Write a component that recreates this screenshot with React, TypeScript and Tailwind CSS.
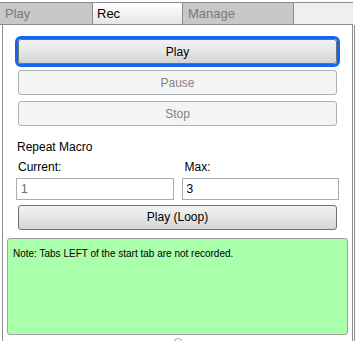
import React, { useState } from 'react';

const font = { fontFamily: '"Segoe UI", "Liberation Sans", Arial, sans-serif' };

type BtnProps = { label: string; disabled?: boolean; focused?: boolean; onClick?: () => void };

const WinButton: React.FC<BtnProps> = ({ label, disabled, focused, onClick }) => {
  if (disabled) {
    return (
      <button
        disabled
        className="h-[25px] w-full rounded-[3px] border border-[#adb2b5] bg-[#f4f4f4] text-[12px] text-[#838383]"
      >
        {label}
      </button>
    );
  }
  return (
    <button
      onClick={onClick}
      className={`h-[25px] w-full rounded-[3px] border border-[#707070] bg-gradient-to-b from-[#f2f2f2] via-[#e6e6e6] to-[#d3d3d3] text-[12px] text-black ${
        focused ? 'shadow-[0_0_0_3px_#1466f0]' : ''
      }`}
    >
      {label}
    </button>
  );
};

export default function App() {
  const [current, setCurrent] = useState('1');
  const [max, setMax] = useState('3');

  return (
    <div className="relative w-[362px] h-[341px] bg-white overflow-hidden" style={font}>
      <div className="w-[353px] h-full flex flex-col pt-[2px]">
        {/* tabs */}
        <div className="flex h-[24px] border-t border-b border-[#8c8c8c] bg-[#efefef]">
          <div className="w-[93px] bg-[#c8c8c8] border-r border-[#8c8c8c] pl-[5px] text-[13px] leading-[21px] text-[#7a7a7a]">
            Play
          </div>
          <div className="w-[90px] bg-gradient-to-b from-white to-[#e6e6e6] border-r border-[#8c8c8c] pl-[4px] text-[13px] leading-[21px] text-black">
            Rec
          </div>
          <div className="w-[111px] bg-[#c8c8c8] border-r border-[#8c8c8c] pl-[5px] text-[13px] leading-[21px] text-[#7a7a7a]">
            Manage
          </div>
        </div>

        {/* panel */}
        <div className="flex-1 ml-[2px] border-l border-r border-[#8c8c8c] flex flex-col">
          <div className="flex flex-col pl-[15px] pr-[15px] pt-[14px] gap-[6px]">
            <WinButton label="Play" focused />
            <WinButton label="Pause" disabled />
            <WinButton label="Stop" disabled />
          </div>

          <div className="pl-[13px] pr-[13px] pt-[12px] text-[12px] text-black">
            <div className="leading-[18px] pl-[1px]">Repeat Macro</div>
            <div className="flex gap-[8px] mt-[3px]">
              <div className="flex-1 min-w-0 flex flex-col">
                <label className="leading-[16px] pl-[2px]">Current:</label>
                <input
                  value={current}
                  onChange={(e) => setCurrent(e.target.value)}
                  className="mt-[3px] h-[22px] w-full min-w-0 border border-[#abadb3] px-[4px] text-[12px] text-[#6d6d6d] outline-none"
                />
              </div>
              <div className="flex-1 min-w-0 flex flex-col">
                <label className="leading-[16px] pl-[3px]">Max:</label>
                <input
                  value={max}
                  onChange={(e) => setMax(e.target.value)}
                  className="mt-[3px] h-[22px] w-full min-w-0 border border-[#abadb3] px-[4px] text-[12px] text-black outline-none"
                />
              </div>
            </div>
          </div>

          <div className="pl-[15px] pr-[15px] pt-[4px]">
            <WinButton label="Play (Loop)" />
          </div>

          <div className="mx-[4px] mt-[8px] h-[97px] rounded-[3px] border border-[#a0a0a0] bg-[#aaffaa] px-[5px] pt-[7px] text-[10px] text-black">
            Note: Tabs LEFT of the start tab are not recorded.
          </div>

          <div className="flex justify-center mt-[3px]">
            <div className="w-[8px] h-[4px] rounded-t-full border border-b-0 border-[#b0b0b0]" />
          </div>
        </div>
      </div>
      <div className="absolute top-[25px] left-[354px] w-px h-[316px] bg-[#8c8c8c]" />
    </div>
  );
}
